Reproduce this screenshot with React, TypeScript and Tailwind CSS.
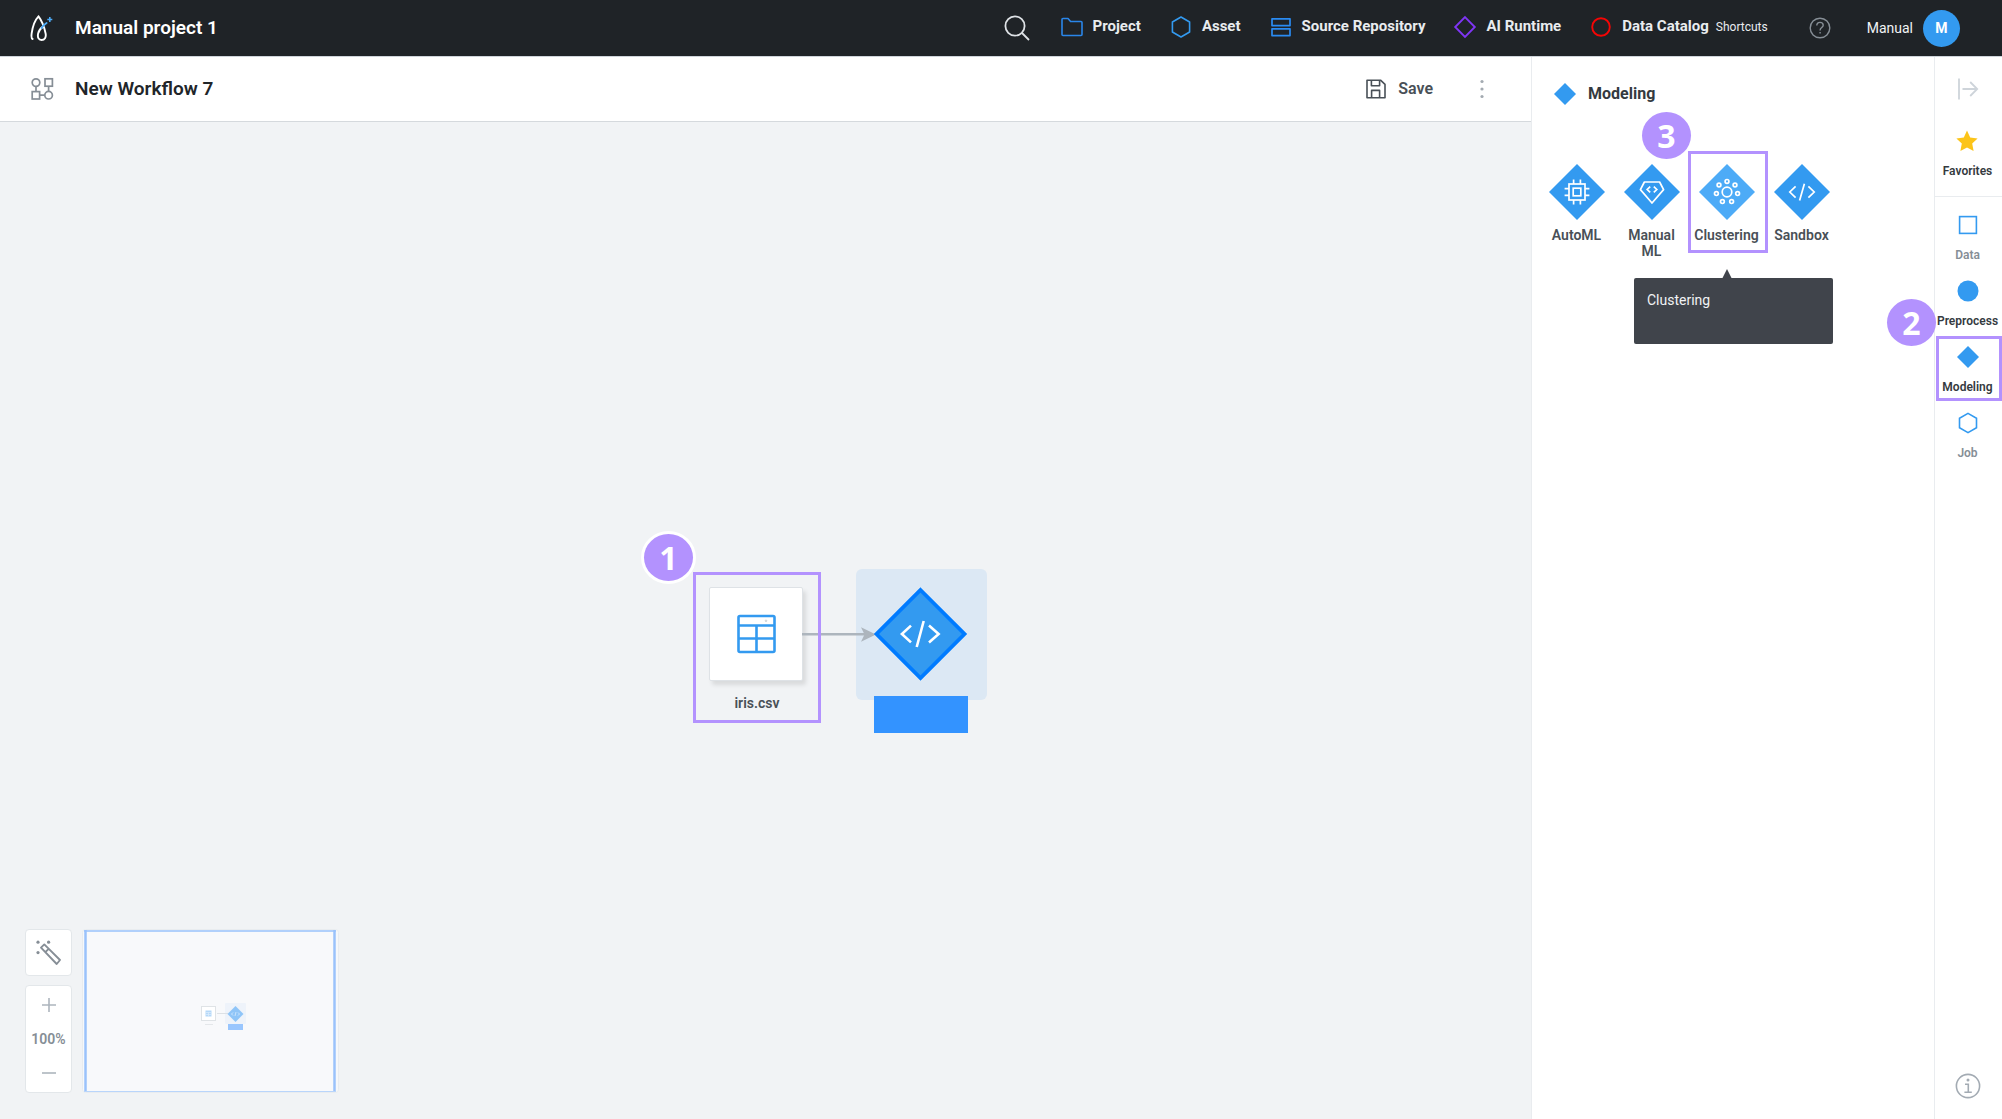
import React from "react";

const Logo = () => (
  <svg width="24" height="28" viewBox="0 0 24 28" fill="none" strokeLinecap="round">
    <path d="M2.6 25C1.4 24.6 1.3 22 1.7 19.2C2.6 13 4.6 6.5 8.5 2.4C12 7 14.3 13 15.6 19.5C16.4 23.5 14.6 26 11.6 26C8.4 26 7.4 23.2 8.1 19.6C8.7 16.6 10.4 14.4 13 12.6" stroke="#fff" strokeWidth="1.9" />
    <path d="M11.6 14C12.8 12 14.4 10.4 16.6 9" stroke="#4dabf7" strokeWidth="1.9" />
    <path d="M19.8 3v5M17.3 5.5h5" stroke="#4dabf7" strokeWidth="1.6" strokeLinecap="butt" />
  </svg>
);

const SearchIcon = () => (
  <svg width="26" height="26" viewBox="0 0 26 26" fill="none" stroke="#dee2e6" strokeWidth="1.8">
    <circle cx="11" cy="11" r="9.6" />
    <path d="M18 18l7 7" />
  </svg>
);

const FolderIcon = () => (
  <svg width="24" height="24" viewBox="0 0 24 24" fill="none" stroke="#2a86ea" strokeWidth="1.6" strokeLinejoin="round">
    <path d="M2 19.5V4.5a1 1 0 0 1 1-1h5l2.6 3H21a1 1 0 0 1 1 1v12a1 1 0 0 1-1 1H3a1 1 0 0 1-1-1z" />
  </svg>
);

const HexIcon = () => (
  <svg width="24" height="24" viewBox="0 0 24 24" fill="none" stroke="#339af0" strokeWidth="1.6" strokeLinejoin="round">
    <path d="M12 2l8.6 5v10L12 22l-8.6-5V7z" />
  </svg>
);

const RepoIcon = () => (
  <svg width="24" height="24" viewBox="0 0 24 24" fill="none" stroke="#2a8bf2" strokeWidth="1.7" strokeLinejoin="round">
    <rect x="3" y="3.8" width="18" height="6.8" />
    <rect x="3" y="13.8" width="18" height="6.8" />
  </svg>
);

const DiamondOutline = () => (
  <svg width="24" height="24" viewBox="0 0 24 24" fill="none" stroke="#7f35f5" strokeWidth="1.9">
    <path d="M12 2.2l9.8 9.8-9.8 9.8L2.2 12z" />
  </svg>
);

const RedCircle = () => (
  <svg width="24" height="24" viewBox="0 0 24 24" fill="none" stroke="#f50505" strokeWidth="1.9">
    <circle cx="12" cy="12" r="8.8" />
  </svg>
);

const HelpIcon = () => (
  <svg width="22" height="22" viewBox="0 0 22 22" fill="none" stroke="#868e96" strokeWidth="1.4">
    <circle cx="11" cy="11" r="9.8" />
    <path d="M7.8 8.6c0-2 1.4-3.2 3.2-3.2s3.2 1.2 3.2 2.9c0 2.2-3.1 2.4-3.1 4.9v.4" />
    <path d="M11.1 15v1.6" />
  </svg>
);

const WorkflowIcon = () => (
  <svg width="24" height="24" viewBox="0 0 24 24" fill="none" stroke="#868e96" strokeWidth="1.7">
    <circle cx="6" cy="5.6" r="3.8" />
    <rect x="15" y="1.8" width="7.4" height="7.4" />
    <rect x="2.2" y="14.6" width="7.4" height="7.4" />
    <circle cx="18.6" cy="18.2" r="3.8" />
    <path d="M6 9.4v5.2M18.6 9.2v5.2M9.6 18.2h5.2" />
  </svg>
);

const SaveIcon = () => (
  <svg width="20" height="20" viewBox="0 0 20 20" fill="none" stroke="#495057" strokeWidth="1.6" strokeLinejoin="round">
    <path d="M1 1.2h13.5L19 5.4v13.4H1z" />
    <path d="M5.4 1.2v5.6h8.2V1.2M5.6 18.8v-7.4h8v7.4" />
  </svg>
);

const DotsIcon = () => (
  <svg width="24" height="24" viewBox="0 0 24 24" fill="#a3aab1">
    <circle cx="12" cy="4.5" r="1.6" />
    <circle cx="12" cy="12" r="1.6" />
    <circle cx="12" cy="19.5" r="1.6" />
  </svg>
);

const CollapseIcon = () => (
  <svg width="22" height="22" viewBox="0 0 22 22" fill="none" stroke="#ced4da" strokeWidth="1.8">
    <path d="M2 .5v21M5.5 11h14.7M13.2 4l7 7-7 7" />
  </svg>
);

const DiamondSolid = () => (
  <svg width="22" height="22" viewBox="0 0 22 22" fill="#339af0">
    <path d="M11 0l11 11-11 11L0 11z" />
  </svg>
);

const StarIcon = () => (
  <svg width="22" height="22" viewBox="0 0 22 22" fill="#fcc419">
    <path d="M11 .6l3.2 6.8 7.4 1-5.4 5.2 1.4 7.4L11 17.4 4.4 21l1.4-7.4L.4 8.4l7.4-1z" />
  </svg>
);

const SquareIcon = () => (
  <svg width="22" height="22" viewBox="0 0 22 22" fill="none" stroke="#339af0" strokeWidth="1.6">
    <rect x="2.6" y="2.6" width="16.8" height="16.8" />
  </svg>
);

const CircleSolid = () => (
  <svg width="22" height="22" viewBox="0 0 22 22" fill="#339af0">
    <circle cx="11" cy="11" r="10.5" />
  </svg>
);

const HexRail = () => (
  <svg width="22" height="22" viewBox="0 0 22 22" fill="none" stroke="#339af0" strokeWidth="1.6">
    <path d="M11 1.4l8.5 4.8v9.6L11 20.6l-8.5-4.8V6.2z" />
  </svg>
);

const InfoIcon = () => (
  <svg width="26" height="26" viewBox="0 0 26 26" fill="none" stroke="#a3abb3" strokeWidth="1.6">
    <circle cx="13" cy="13" r="11.6" />
    <path d="M10 11.2h3.3v7.6M9.4 19.2h7.4" />
    <circle cx="13" cy="7" r="1.5" fill="#a3abb3" stroke="none" />
  </svg>
);

const AutoMLGlyph = () => (
  <g>
    <rect x="20" y="20" width="16" height="16" />
    <rect x="24.2" y="24.2" width="7.6" height="7.6" />
    <path d="M24.6 20v-4.4M31.4 20v-4.4M24.6 40.4V36M31.4 40.4V36M20 24.6h-4.4M20 31.4h-4.4M40.4 24.6H36M40.4 31.4H36" />
  </g>
);

const ManualGlyph = () => (
  <g>
    <path d="M20.4 18h15.2l4 7.6L28 39 16.4 25.6z" strokeLinejoin="round" />
    <path d="M26.2 22.6l-3 2.9 3 2.9M29.8 22.6l3 2.9-3 2.9" />
  </g>
);

const ClusterGlyph = () => (
  <g>
    <circle cx="28" cy="28" r="4.8" />
    <circle cx="28" cy="17.4" r="1.9" />
    <circle cx="36" cy="21" r="1.9" />
    <circle cx="38.6" cy="29.6" r="1.9" />
    <circle cx="32.6" cy="37.6" r="1.9" />
    <circle cx="23.4" cy="37.6" r="1.9" />
    <circle cx="17.4" cy="29.6" r="1.9" />
    <circle cx="20" cy="21" r="1.9" />
  </g>
);

const CodeGlyph = () => (
  <path d="M21.6 22.4L15.8 28l5.8 5.6M34.4 22.4l5.8 5.6-5.8 5.6M30.4 19.8l-4.8 16.6" />
);

const TileIcon = ({ fill, children }: { fill: string; children: React.ReactNode }) => (
  <svg width="56" height="56" viewBox="0 0 56 56" fill="none">
    <path d="M28 0l28 28-28 28L0 28z" fill={fill} />
    <g stroke="#fff" strokeWidth="1.7">{children}</g>
  </svg>
);

const Badge = ({ n, className }: { n: number; className: string }) => (
  <span
    className={`absolute flex h-[47px] w-[49px] items-center justify-center rounded-[50%] bg-[#b392fe] font-['Open_Sans',sans-serif] text-[32px] leading-none font-bold text-white ${className}`}
  >
    {n}
  </span>
);

const navItems = [
  { label: "Project", icon: <FolderIcon /> },
  { label: "Asset", icon: <HexIcon /> },
  { label: "Source Repository", icon: <RepoIcon /> },
  { label: "AI Runtime", icon: <DiamondOutline /> },
  { label: "Data Catalog", icon: <RedCircle />, note: "Shortcuts" },
];

const tiles = [
  { label: "AutoML", fill: "#339af0", glyph: <AutoMLGlyph /> },
  { label: "Manual ML", fill: "#339af0", glyph: <ManualGlyph /> },
  { label: "Clustering", fill: "#4dabf7", glyph: <ClusterGlyph />, active: true },
  { label: "Sandbox", fill: "#339af0", glyph: <CodeGlyph /> },
];

const railItems = [
  { label: "Data", icon: <SquareIcon />, tone: "text-[#868e96]" },
  { label: "Preprocess", icon: <CircleSolid />, tone: "text-[#343a40]" },
  { label: "Modeling", icon: <DiamondSolid />, tone: "text-[#343a40]", active: true },
  { label: "Job", icon: <HexRail />, tone: "text-[#868e96]" },
];

const Header = () => (
  <header className="flex h-14 shrink-0 items-center bg-[#1f2327] pr-[42px] pl-[30px] text-[#f1f3f5]">
    <a href="#home" aria-label="Home"><Logo /></a>
    <h1 className="ml-[21px] text-[19px] font-semibold text-white">Manual project 1</h1>
    <nav className="ml-auto flex items-center gap-7">
      <button aria-label="Search" className="mr-0.5"><SearchIcon /></button>
      {navItems.map((item) => (
        <a key={item.label} href="#nav" className="flex items-center gap-[9px] pb-[3px] text-[15px] font-bold whitespace-nowrap text-[#e9ecef]">
          {item.icon}
          <span>
            {item.label}
            {item.note && <small className="ml-[7px] text-xs font-normal">{item.note}</small>}
          </span>
        </a>
      ))}
    </nav>
    <button aria-label="Help" className="ml-[41px]"><HelpIcon /></button>
    <button className="ml-9 flex items-center gap-2.5 text-sm">
      Manual
      <span className="flex size-[37px] items-center justify-center rounded-full bg-[#339af0] text-sm font-bold text-white">M</span>
    </button>
  </header>
);

const Canvas = () => (
  <section aria-label="Workflow canvas" className="relative flex-1 bg-[#f1f3f5]">
    <div className="absolute top-[447px] left-[856px] size-[131px] rounded-md bg-[#dce8f4]" />
    <div className="absolute top-[465px] left-[709px] size-[94px] rounded-xs border border-[#dee2e6] bg-white shadow-[3px_4px_4px_rgba(0,0,0,0.1)]">
      <svg className="m-auto h-full" width="39" height="39" viewBox="0 0 39 39" fill="none" stroke="#339af0" strokeWidth="2.6">
        <rect x="1.5" y="1.5" width="36" height="36" rx="1.5" />
        <path d="M1.5 11h36M1.5 24h36M19.5 11v26.5" />
        <circle cx="29" cy="6.3" r=".8" stroke="#adb5bd" strokeWidth=".6" />
      </svg>
    </div>
    <p className="absolute top-[571px] left-[709px] w-24 text-center text-sm leading-5 font-semibold text-[#495057]">iris.csv</p>
    <svg className="absolute top-[505px] left-[802px]" width="76" height="15" viewBox="0 0 76 15">
      <path d="M0 7.3h66" stroke="#adb5bd" strokeWidth="2.4" />
      <path d="M59 .3l15 7.2-15 7.2 3.5-7.2z" fill="#adb5bd" />
    </svg>
    <svg className="absolute top-[465px] left-[873px]" width="95" height="94" viewBox="0 0 95 94" fill="none">
      <path d="M47.5 3l44 44-44 44-44-44z" fill="#339af0" stroke="#007bff" strokeWidth="3.8" />
      <path d="M38 38.6L28.9 47l9.1 8.4M56 38.6l9.6 8.4-9.6 8.4M50.7 34l-7 26" stroke="#fff" strokeWidth="2.6" />
    </svg>
    <input aria-label="Node name" className="absolute top-[574px] left-[874px] h-[37px] w-[94px] bg-[#3393ff] outline-none" />
    <div className="absolute top-[450px] left-[693px] h-[151px] w-[128px] border-[3px] border-[#b392fe]" />
    <Badge n={1} className="top-[412px] left-[644px] ring-[3px] ring-white" />

    <div className="absolute bottom-[26px] left-[25px] flex gap-2.5">
      <div className="flex flex-col gap-[9px]">
        <button aria-label="Auto arrange" className="flex size-[47px] items-center justify-center rounded-sm border border-[#e3e7ea] bg-white">
          <svg width="26" height="26" viewBox="0 0 26 26" fill="none" stroke="#868e96" strokeWidth="1.9" strokeLinejoin="round">
            <path d="M5 7.6L8.3 4.4L24 20L20.7 24z M9.4 12.2L12.6 8.8" />
            <g fill="#868e96" stroke="none">
              <circle cx="2" cy="2.2" r="1.6" />
              <circle cx="12.6" cy="2.2" r="1.6" />
              <circle cx="2" cy="12.6" r="1.6" />
            </g>
          </svg>
        </button>
        <div className="flex h-[108px] w-[47px] flex-col items-center justify-between rounded-sm border border-[#e3e7ea] bg-white py-2 text-sm font-semibold text-[#868e96]">
          <button aria-label="Zoom in">
            <svg width="22" height="22" viewBox="0 0 22 22" stroke="#adb5bd" strokeWidth="1.6"><path d="M4 11h14M11 4v14" /></svg>
          </button>
          <output className="leading-5">100%</output>
          <button aria-label="Zoom out">
            <svg width="22" height="22" viewBox="0 0 22 22" stroke="#adb5bd" strokeWidth="1.6"><path d="M4 11h14" /></svg>
          </button>
        </div>
      </div>
      <svg aria-label="Minimap" width="257" height="164" viewBox="0 0 257 164" fill="none">
        <rect x=".5" y=".5" width="256" height="163" rx="3" fill="#f6f8fa" stroke="#e9ecef" />
        <rect x="2" y="1" width="252" height="162" fill="#f8f9fb" />
        <path d="M2 2h252" stroke="#9ac2fb" strokeWidth="1.7" />
        <path d="M3.5 1v162M252.5 1v162" stroke="#9ac2fb" strokeWidth="2.5" />
        <path d="M2 162.5h252" stroke="#b9d5fb" />
        <rect x="143" y="74" width="21" height="21" rx="1" fill="#eef3fa" />
        <rect x="119.5" y="77.5" width="14" height="14" fill="#fff" stroke="#dfe3e6" />
        <path d="M123.5 81.5h6v6h-6z" fill="#b5d8f8" />
        <path d="M123.5 83.5h6M123.5 85.5h6M126.5 83.5v4" stroke="#dceefc" strokeWidth=".7" />
        <path d="M123 95.5h8" stroke="#e4e7ea" />
        <path d="M135 84.5h11" stroke="#dde1e5" />
        <path d="M153.5 77l8 8-8 8-8-8z" fill="#8fc5f8" />
        <path d="M151 83.5l-1.5 1.5 1.5 1.5M156 83.5l1.5 1.5-1.5 1.5M154 83l-1 4" stroke="#d8ebfc" strokeWidth=".8" />
        <rect x="146" y="95" width="15" height="6" fill="#99c6fe" />
      </svg>
    </div>
  </section>
);

const ModelingPanel = () => (
  <aside className="w-[403px] shrink-0 border-l border-[#e9ecef] bg-white">
    <h3 className="flex h-[73px] items-center gap-3 pl-[22px] text-base font-bold text-[#343a40]">
      <DiamondSolid />
      Modeling
    </h3>
    <div className="grid grid-cols-[repeat(4,75px)] pt-[34px] pl-[7px]">
      {tiles.map((t) => (
        <div key={t.label} className="relative">
          <button className="flex w-full flex-col items-center text-sm leading-4 font-semibold text-[#495057]">
            <TileIcon fill={t.fill}>{t.glyph}</TileIcon>
            <span className="mt-[7px] px-2">{t.label}</span>
          </button>
          {t.active && (
            <>
              <span className="absolute -top-[13px] -left-px h-[102px] w-20 border-[3px] border-[#b392fe]" />
              <Badge n={3} className="-top-[52px] -left-[47px]" />
              <div role="tooltip" className="absolute top-[114px] -left-[55px] h-[66px] w-[199px] rounded-xs bg-[#40444b] px-[13px] py-3 text-sm leading-5 text-[#f1f3f5]">
                <svg className="absolute -top-[9px] left-[88px]" width="10" height="10" viewBox="0 0 10 10" fill="#40444b">
                  <path d="M5 0l5 10H0z" />
                </svg>
                Clustering
              </div>
            </>
          )}
        </div>
      ))}
    </div>
  </aside>
);

const Rail = () => (
  <nav aria-label="Blocks" className="flex w-[68px] shrink-0 flex-col items-center border-l border-[#e9ecef] bg-white text-xs font-semibold">
    <button aria-label="Collapse panel" className="mt-[21px] pr-0.5"><CollapseIcon /></button>
    <button className="mt-[30px] flex flex-col items-center gap-[11px] pr-0.5 text-[#343a40]">
      <StarIcon />
      Favorites
    </button>
    <hr className="mt-[17px] w-full border-[#e9ecef]" />
    <div className="mt-2.5 flex w-full flex-col">
      {railItems.map((r) => (
        <button key={r.label} className={`relative flex h-[66px] w-full flex-col items-center gap-[11px] pt-[7px] pr-0.5 ${r.tone}`}>
          {r.icon}
          {r.label}
          {r.active && <span className="absolute -top-[3px] right-0 left-px h-[65px] border-[3px] border-[#b392fe]" />}
          {r.active && <Badge n={2} className="-top-10 -left-12" />}
        </button>
      ))}
    </div>
    <button aria-label="Information" className="mt-auto mb-5 pr-0.5"><InfoIcon /></button>
  </nav>
);

export default function App() {
  return (
    <div className="flex min-h-screen flex-col font-[Roboto,sans-serif]">
      <Header />
      <main className="flex flex-1 border-t border-[#ced4da]">
        <div className="flex min-w-0 flex-1 flex-col">
          <div className="flex h-[65px] shrink-0 items-center border-b border-[#d5d9dd] bg-white pr-[37px] pl-[30px]">
            <WorkflowIcon />
            <h2 className="ml-[21px] text-[19px] font-semibold text-[#212529]">New Workflow 7</h2>
            <button className="ml-auto flex items-center gap-3 text-base font-semibold text-[#495057]">
              <SaveIcon />
              Save
            </button>
            <button aria-label="More" className="ml-[37px]"><DotsIcon /></button>
          </div>
          <Canvas />
        </div>
        <ModelingPanel />
        <Rail />
      </main>
    </div>
  );
}
